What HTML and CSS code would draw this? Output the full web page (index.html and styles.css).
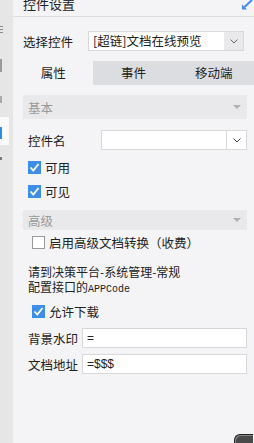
FILE: index.html
```html
<!DOCTYPE html>
<html lang="zh-CN">
<head>
  <meta charset="UTF-8">
  <title>控件设置</title>
  <link rel="stylesheet" href="styles.css">
</head>
<body>

<div class="app">
  <div class="rail">
    <span class="mark m1"></span>
    <span class="mark m2"></span>
    <span class="mark m3"></span>
    <div class="rail-item active"></div>
    <span class="mark m4"></span>
  </div>

  <div class="panel">
    <div class="panel-head">
      <span class="title">控件设置</span>
      <svg class="shrink" width="12" height="10" viewBox="0 0 12 10">
        <path d="M11 0 L3.5 7" stroke="#3d8ee8" stroke-width="2" fill="none"/>
        <path d="M1 9.5 L1 4.5 L6 9.5 Z" fill="#3d8ee8"/>
      </svg>
    </div>

    <div class="picker">
      <label>选择控件</label>
      <div class="combo">
        <span class="combo-text">[超链]文档在线预览</span>
        <span class="combo-btn gray">
          <svg width="8" height="5" viewBox="0 0 8 5"><path d="M0.5 0.5 L4 4 L7.5 0.5" stroke="#666" fill="none"/></svg>
        </span>
      </div>
    </div>

    <div class="tabs">
      <div class="tab active">属性</div>
      <div class="tab">事件</div>
      <div class="tab">移动端</div>
    </div>

    <div class="props">
      <div class="group g-basic">基本<span class="tri"></span></div>

      <div class="field">
        <label>控件名</label>
        <div class="combo wide">
          <span class="combo-text"></span>
          <span class="combo-btn">
            <svg width="8" height="5" viewBox="0 0 8 5"><path d="M0.5 0.5 L4 4 L7.5 0.5" stroke="#444" fill="none"/></svg>
          </span>
        </div>
      </div>

      <div class="check on first">可用</div>
      <div class="check on">可见</div>

      <div class="group g-adv">高级<span class="tri"></span></div>

      <div class="check sub">启用高级文档转换（收费）</div>

      <p class="note">请到决策平台-系统管理-常规<br>配置接口的<span class="mono">APPCode</span></p>

      <div class="check sub on dl">允许下载</div>

      <div class="field short f-mark">
        <label>背景水印</label>
        <div class="input">=</div>
      </div>
      <div class="field short f-url">
        <label>文档地址</label>
        <div class="input">=$$$</div>
      </div>
    </div>
  </div>
</div>

<div class="corner"></div>

</body>
</html>
```

FILE: styles.css
```css
body { margin: 0; font-family: "Noto Sans CJK SC", "Noto Sans", sans-serif; font-size: 12px; color: #222; background: #f4f4f6; overflow: hidden; }
.app { display: flex; height: 443px; }

.rail { width: 13px; background: #e6e6e6; flex-shrink: 0; display: flex; flex-direction: column; }
.mark { display: block; background: #999; width: 2px; }
.m1 { margin-top: 26px; height: 8px; background: repeating-linear-gradient(#8a8a8a 0 1px, transparent 1px 3px); width: 3px; }
.m2 { margin-top: 25px; height: 13px; background: #9a9a9a; width: 2px; }
.m3 { margin-top: 24px; height: 7px; background: #aaa; width: 2px; }
.rail-item { margin-top: 14px; height: 28px; width: 9px; background: #fafafa; display: flex; align-items: center; }
.rail-item.active::before { content: ""; width: 2px; height: 12px; background: #2e8cf0; margin-top: 4px; }
.m4 { margin-top: 12px; height: 3px; width: 2px; background: #777; }

.panel { flex: 1; display: flex; flex-direction: column; background: #f4f4f6; }
.panel-head { height: 16px; border-bottom: 1px solid #dcdcde; display: flex; justify-content: space-between; align-items: flex-start; padding-left: 10px; padding-right: 1px; overflow: hidden; }
.title { line-height: 12px; margin-top: -2px; font-size: 13px; }

.picker { display: flex; align-items: center; margin-top: 14px; padding-left: 10px; height: 20px; }
.picker label { width: 65px; font-size: 12.5px; }
.combo { display: flex; width: 156px; height: 20px; box-sizing: border-box; border: 1px solid #d8d8da; background: #fff; }
.combo-text { flex: 1; padding-left: 4px; line-height: 18px; font-size: 12.5px; white-space: nowrap; overflow: hidden; }
.combo-btn { width: 19px; display: flex; align-items: center; justify-content: center; background: #fff; }
.combo-btn.gray { background: #e9e9eb; }
.combo.wide { width: 146px; }
.combo.wide .combo-btn { border-left: 1px solid #d8d8da; }

.tabs { display: flex; margin-top: 10px; height: 24px; background: #dcdde0; }
.tab { flex: 1; text-align: center; line-height: 24px; font-size: 12.5px; }
.tab.active { background: #f4f4f6; }

.props { padding: 0 7px 0 10px; display: flex; flex-direction: column; }
.group { display: flex; justify-content: space-between; align-items: center; background: #e9e9eb; color: #999; padding: 0 6px 0 5px; font-size: 12.5px; }
.g-basic { margin-top: 10px; height: 24px; }
.g-adv { margin-top: 7px; height: 20px; }
.tri { width: 0; height: 0; border-left: 4px solid transparent; border-right: 4px solid transparent; border-top: 4px solid #b0b0b2; }

.field { display: flex; align-items: center; padding-left: 5px; height: 20px; margin-top: 11px; justify-content: space-between; }
.field label { font-size: 12.5px; }
.field.short label { width: 54px; }
.f-mark { margin-top: 5px; }
.f-url { margin-top: 6px; }
.input { flex: 1; height: 20px; box-sizing: border-box; border: 1px solid #d8d8da; background: #fff; line-height: 18px; padding-left: 4px; font-family: "Liberation Sans", "Noto Sans", sans-serif; font-size: 12px; }

.check { display: flex; align-items: center; height: 24px; padding-left: 5px; font-size: 12.5px; }
.check::before { content: ""; width: 11px; height: 11px; border: 1px solid #999; background: #fff; margin-right: 4px; flex-shrink: 0; }
.check.on::before { width: 13px; height: 13px; border: none; background: #3d8ee8 url("data:image/svg+xml,%3Csvg xmlns='http://www.w3.org/2000/svg' width='13' height='13'%3E%3Cpath d='M2.5 6.5 L5.3 9.5 L10.5 3' stroke='white' stroke-width='1.8' fill='none'/%3E%3C/svg%3E"); }
.check.first { margin-top: 5px; }
.check.sub { padding-left: 9px; }
.dl { margin-top: 4px; }

.note { margin: 10px 0 0 5px; line-height: 15px; font-size: 12px; }
.mono { font-family: "Liberation Mono", "DejaVu Sans Mono", monospace; font-size: 10px; line-height: 10px; }

.corner { position: absolute; left: 234px; top: 434px; width: 18px; height: 9px; border-radius: 6px 0 0 0; background: #4a4a4a; border: 1px solid #222; border-right: none; border-bottom: none; box-shadow: inset 1px 1px 0 #888; }
```
